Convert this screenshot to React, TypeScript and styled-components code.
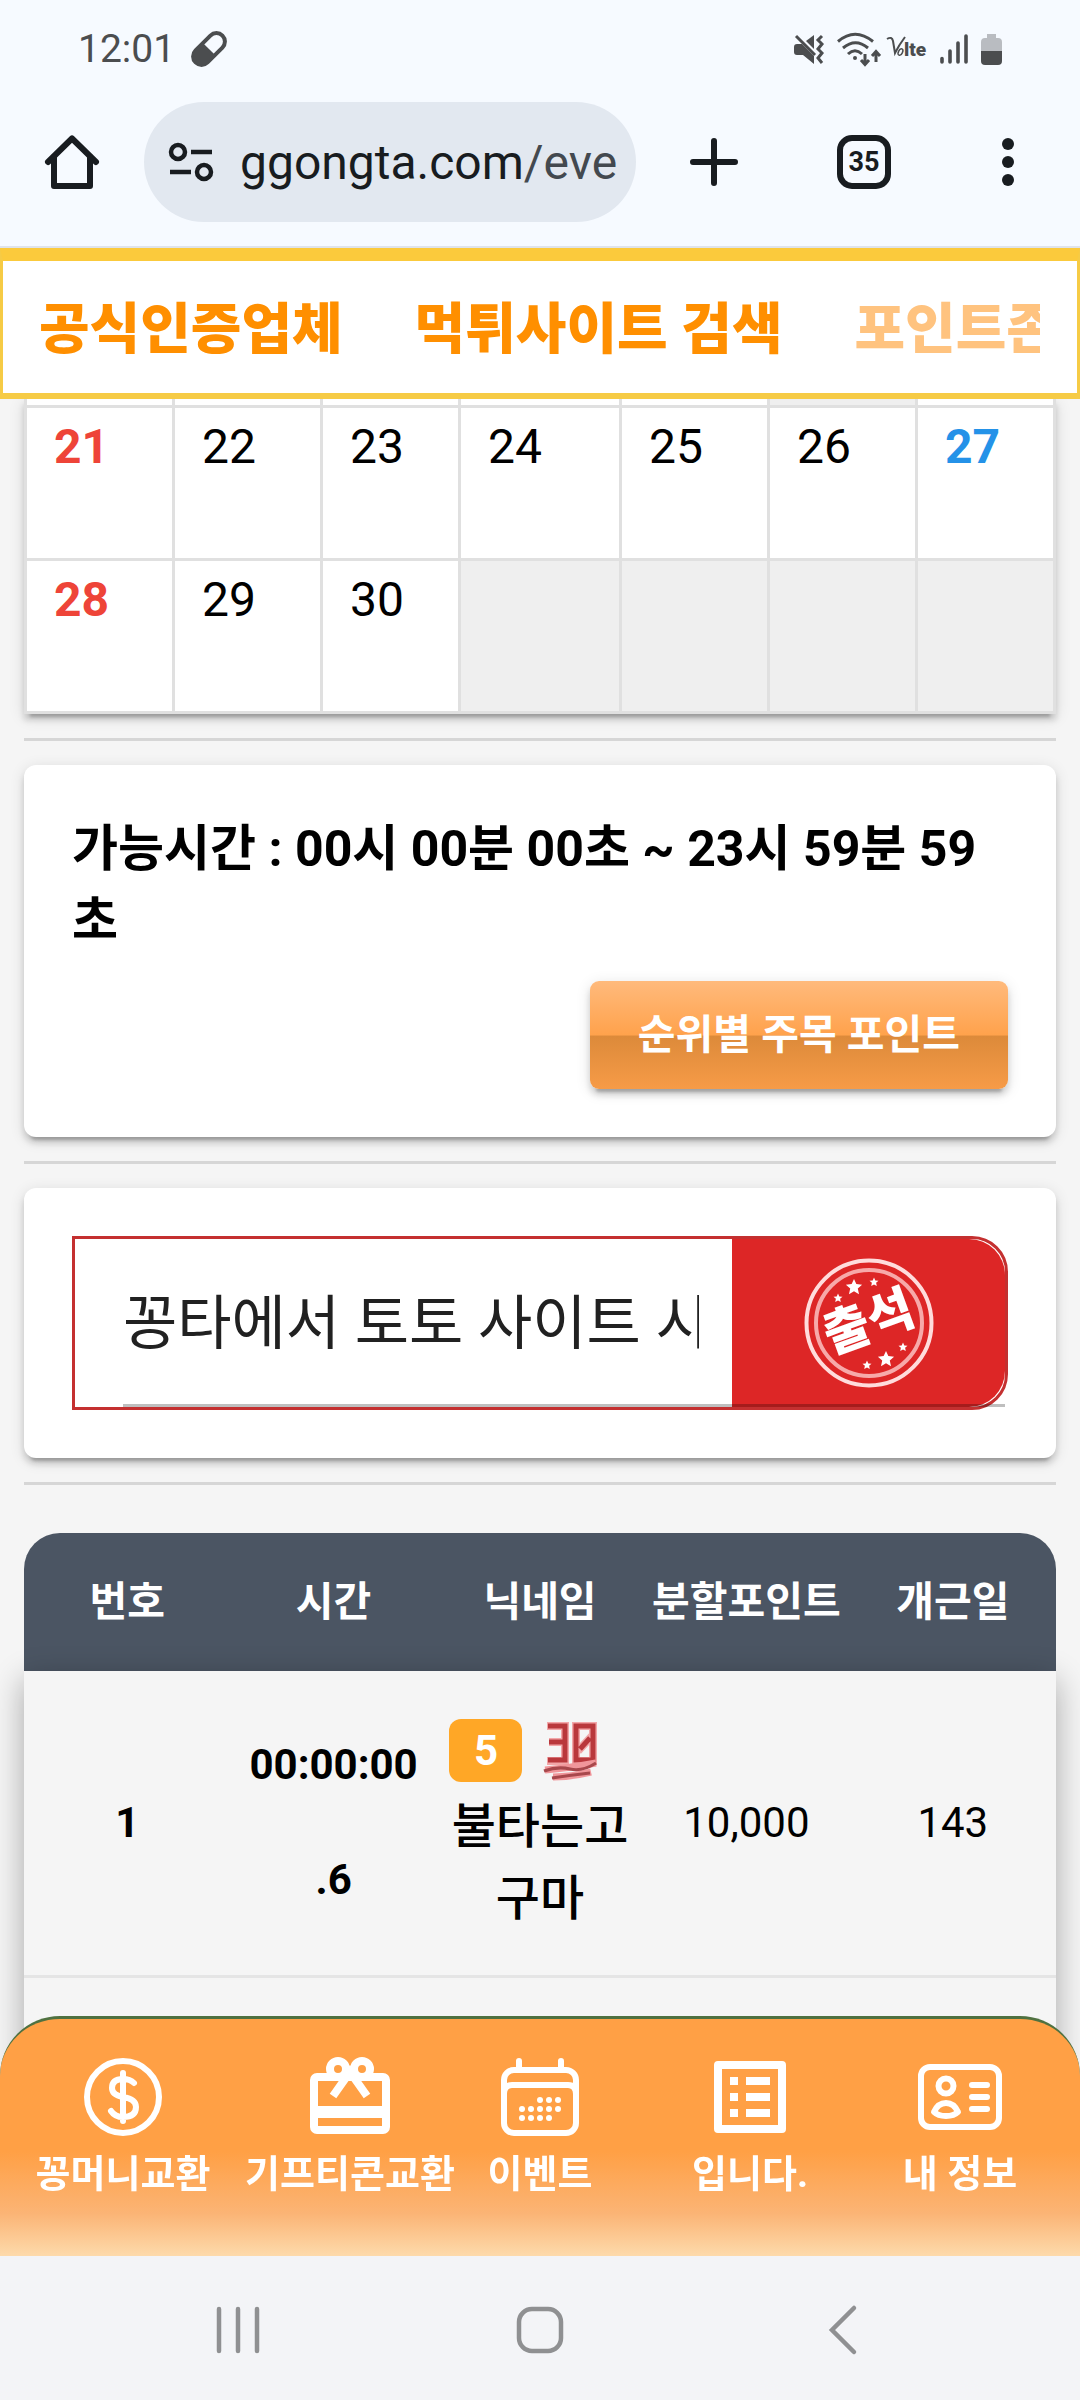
import React from "react";
import styled, { createGlobalStyle } from "styled-components";

const GlobalStyle = createGlobalStyle`
  *, *::before, *::after { box-sizing: border-box; }
  body {
    margin: 0;
    background: #f5f5f5;
    color: #000;
    font-family: Roboto, "Noto Sans CJK KR", sans-serif;
    font-size: 42px;
  }
  button, input { font: inherit; color: inherit; border: 0; background: none; padding: 0; margin: 0; }
  a { color: inherit; text-decoration: none; }
  svg { display: block; flex-shrink: 0; overflow: visible; }
`;

const cardShadow =
  "0 6px 6px rgba(0,0,0,.14), 0 9px 3px -6px rgba(0,0,0,.2), 0 3px 15px rgba(0,0,0,.12)";

const Shell = styled.div`
  min-height: 100vh;
  display: flex;
  flex-direction: column;
  padding-bottom: 144px;
`;

/* ---------- phone status bar ---------- */

const StatusBar = styled.div`
  height: 98px;
  padding: 0 78px;
  display: flex;
  align-items: center;
  justify-content: space-between;
  background: #f6faff;
  color: #4b4d4f;
`;

const StatusGroup = styled.div<{ $gap: number }>`
  display: flex;
  align-items: center;
  gap: ${(p) => p.$gap}px;
`;

const Clock = styled.time`
  font-size: 39px;
  line-height: 48px;
`;

/* ---------- browser toolbar ---------- */

const Toolbar = styled.header`
  height: 150px;
  padding-bottom: 20px;
  display: flex;
  align-items: center;
  background: #f6faff;
  border-bottom: 2px solid #dfe3ea;
  color: #181c20;
`;

const ToolButton = styled.button<{ $wide?: boolean }>`
  width: ${(p) => (p.$wide ? 156 : 144)}px;
  height: 120px;
  display: flex;
  align-items: center;
  justify-content: center;
`;

const AddressBar = styled.button`
  flex: 1;
  min-width: 0;
  height: 120px;
  padding: 0 16px 0 24px;
  border-radius: 60px;
  background: #e2e8f0;
  display: flex;
  align-items: center;
  gap: 26px;
  overflow: hidden;
  white-space: nowrap;
  font-size: 48px;
`;

const UrlPath = styled.span`
  color: #43494f;
`;

const TabCount = styled.span`
  width: 54px;
  height: 54px;
  border: 6px solid #181c20;
  border-radius: 15px;
  display: flex;
  align-items: center;
  justify-content: center;
  font-size: 27px;
  font-weight: 700;
`;

/* ---------- site menu ---------- */

const SiteMenu = styled.nav`
  border: 3px solid #f6cb45;
  border-top: 13px solid #fbca3c;
  border-bottom-width: 6px;
  background: #fff;
  padding: 0 37px 0 36px;
  position: relative;
  z-index: 1;
`;

const MenuTrack = styled.div`
  height: 132px;
  padding-top: 4px;
  display: flex;
  align-items: center;
  gap: 72px;
  overflow: hidden;
  white-space: nowrap;
`;

const MenuLink = styled.a<{ $faded?: boolean }>`
  font-size: 55px;
  line-height: 72px;
  font-weight: 900;
  color: ${(p) => (p.$faded ? "#ffc37f" : "#ff8f00")};
`;

/* ---------- page content ---------- */

const Main = styled.main`
  flex: 1;
  display: flex;
  flex-direction: column;
  padding: 0 24px;
`;

const Calendar = styled.table`
  width: 100%;
  table-layout: fixed;
  border-collapse: collapse;
  background: #fff;
  box-shadow: ${cardShadow};
`;

const DayCell = styled.td<{ $tone?: string; $blank?: boolean; $sliver?: boolean }>`
  height: ${(p) => (p.$sliver ? 7 : 153)}px;
  padding: ${(p) => (p.$sliver ? "0" : "3px 27px")};
  border: 3px solid #e0e0e0;
  border-top-width: ${(p) => (p.$sliver ? 0 : 3)}px;
  vertical-align: top;
  font-size: 48px;
  line-height: 72px;
  font-weight: ${(p) => (p.$tone ? 700 : 400)};
  color: ${(p) => p.$tone || "#000"};
  background: ${(p) => (p.$blank ? "#efefef" : "#fff")};
`;

const Rule = styled.hr`
  width: 100%;
  height: 3px;
  margin: 24px 0;
  border: 0;
  background: #d6d6d6;
`;

const Card = styled.section`
  padding: 48px;
  border-radius: 12px;
  background: #fff;
  box-shadow: ${cardShadow};
`;

const Notice = styled.p`
  margin: 0 0 24px;
  font-size: 50px;
  line-height: 72px;
  font-weight: 700;
  word-break: break-all;
`;

const CardActions = styled.div`
  display: flex;
  justify-content: flex-end;
`;

const GlossButton = styled.button`
  height: 108px;
  padding: 0 48px 8px;
  border-radius: 9px;
  background: linear-gradient(#ffba7c 0%, #ffa24c 50%, #dc8a3a 51%, #f79b47 100%);
  box-shadow: ${cardShadow};
  color: #fff;
  font-size: 41px;
  font-weight: 700;
`;

const CheckInForm = styled.form`
  display: flex;
  height: 174px;
  border: 3px solid #c43030;
  border-radius: 0 36px 36px 0;
  position: relative;
`;

const Underline = styled.span`
  position: absolute;
  left: 48px;
  right: 0;
  bottom: 0;
  height: 3px;
  background: rgba(0, 0, 0, 0.25);
`;

const GreetingField = styled.div`
  flex: 1;
  min-width: 0;
  padding: 0 33px 8px 48px;
`;

const GreetingInput = styled.input`
  width: 100%;
  height: 100%;
  outline: none;
  font-size: 59px;
  color: #212121;
`;

const StampButton = styled.button`
  width: 273px;
  border-radius: 0 36px 36px 0;
  background: #dd2626;
  display: flex;
  align-items: center;
  justify-content: center;
`;

/* ---------- attendance ranking ---------- */

const Ranking = styled.table`
  flex: 1;
  display: flex;
  flex-direction: column;
  margin-top: 24px;
`;

const RankHead = styled.thead`
  display: block;
  background: #4b5563;
  border-radius: 36px 36px 0 0;
  color: #fff;
`;

const RankBody = styled.tbody`
  display: block;
  flex: 1;
  background: #f5f5f5;
  box-shadow: 0 9px 30px rgba(0, 0, 0, 0.32);
`;

const RankRow = styled.tr`
  display: grid;
  grid-template-columns: repeat(5, minmax(0, 1fr));
  align-items: center;
`;

const EntryRow = styled(RankRow)`
  padding: 40px 0;
  border-bottom: 3px solid #e5e5e5;
`;

const HeadCell = styled.th`
  padding: 39px 0;
  font-size: 41px;
  line-height: 60px;
  font-weight: 700;
  white-space: nowrap;
`;

const Cell = styled.td<{ $strong?: boolean }>`
  padding: 0;
  text-align: center;
  font-size: 42px;
  line-height: 60px;
  font-weight: ${(p) => (p.$strong ? 700 : 400)};
`;

const TimeStack = styled.div`
  display: flex;
  flex-direction: column;
  gap: 55px;
`;

const Marks = styled.div`
  display: flex;
  align-items: center;
  justify-content: center;
  gap: 21px;
  height: 80px;
  padding-right: 33px;
`;

const Level = styled.span`
  width: 73px;
  height: 63px;
  border-radius: 12px;
  background: #ffa726;
  color: #fff;
  font-size: 42px;
  line-height: 63px;
  font-weight: 700;
`;

const Nickname = styled.div`
  padding: 0 12px;
  font-size: 48px;
  line-height: 72px;
  font-weight: 500;
  word-break: break-all;
`;

/* ---------- bottom dock ---------- */

const Dock = styled.div`
  position: fixed;
  left: 0;
  right: 0;
  bottom: 0;
`;

const AppNav = styled.nav`
  height: 240px;
  padding: 39px 40px 0 6px;
  display: grid;
  grid-template-columns: 234fr 220fr 160fr 260fr 160fr;
  border-top: 3px solid #4f7140;
  border-radius: 60px 60px 0 0;
  background: linear-gradient(#ffa045 0%, #ffa045 56%, #fbb475 82%, #fddaab 100%);
  color: #fff;
`;

const AppLink = styled.a`
  display: flex;
  flex-direction: column;
  align-items: center;
  gap: 8px;
  font-size: 38px;
  line-height: 60px;
  font-weight: 700;
  white-space: nowrap;
`;

const SystemNav = styled.div`
  height: 144px;
  padding: 4px 87px 0;
  display: grid;
  grid-template-columns: repeat(3, 1fr);
  align-items: center;
  justify-items: center;
  background: #f3f4f7;
  color: #8f9092;
`;

const SystemButton = styled.button`
  padding: 24px;
`;

/* ---------- drawings ---------- */

const PillIcon = () => (
  <svg width="36" height="36" viewBox="0 0 36 36" fill="none">
    <g transform="rotate(45 18 18)">
      <rect x="9.5" y="-1" width="17" height="38" rx="8.5" stroke="currentColor" strokeWidth="4" />
      <path d="M9 18h18v10a9 9 0 0 1-18 0z" fill="currentColor" />
    </g>
  </svg>
);

const MuteIcon = () => (
  <svg width="30" height="32" viewBox="0 0 30 32" fill="none">
    <path d="M3 11h5l12 12v8L9 22H3q-3 0-3-3v-5q0-3 3-3z" fill="currentColor" />
    <path d="M12 8l8-6v14z" fill="currentColor" />
    <path d="M2 3l19 19" stroke="currentColor" strokeWidth="3" />
    <path d="M28 3l-4 4 4 4-4 5 4 4-4 5 4 5" stroke="currentColor" strokeWidth="3" />
  </svg>
);

const WifiIcon = () => (
  <svg width="37" height="34" viewBox="0 0 37 34" fill="none" stroke="currentColor" strokeWidth="3">
    <path d="M1 9.500Q18-5 36 9.500M6 16q12.500-10.500 25 0M11 22q7-6.500 14 0" />
    <circle cx="18" cy="26" r="2" fill="currentColor" stroke="none" />
    <path d="M28 22v10M24 28l4 4.500 4-4.500M39 30V20M35 24l4-4.500 4 4.500" />
  </svg>
);

const VolteIcon = () => (
  <svg width="40" height="26" viewBox="0 0 40 26" fill="none">
    <path d="M0 3q5-3 6 2l2 12Q12 9 18 1" stroke="currentColor" strokeWidth="2" />
    <ellipse cx="13.500" cy="16" rx="2" ry="3.500" transform="rotate(25 13.500 16)" stroke="currentColor" strokeWidth="1.500" />
    <text x="17" y="20" fontSize="19" fontWeight="900" fontFamily="Roboto, sans-serif" fill="currentColor">lte</text>
  </svg>
);

const SignalIcon = () => (
  <svg width="28" height="30" viewBox="0 0 28 30" stroke="currentColor" strokeWidth="3.600" strokeLinecap="round">
    <path d="M2 28v-3.500M10 28V17M18 28V9M26 28V2" />
  </svg>
);

const BatteryIcon = () => (
  <svg width="21" height="32" viewBox="0 0 21 32">
    <path d="M6 1h9v4h2q4 0 4 4v9H0V9q0-4 4-4h2z" fill="#b9bcc1" />
    <path d="M0 18h21v10q0 4-4 4H4q-4 0-4-4z" fill="#4b4d4f" />
  </svg>
);

const HomeIcon = () => (
  <svg width="54" height="54" viewBox="0 0 54 54" fill="none" stroke="currentColor" strokeWidth="6" strokeLinecap="round" strokeLinejoin="round">
    <path d="M3 27L27 3.500 51 27" />
    <path d="M9 22v29h36V22" />
  </svg>
);

const SiteInfoIcon = () => (
  <svg width="46" height="40" viewBox="0 0 46 40" fill="none" stroke="currentColor" strokeWidth="4.500">
    <circle cx="10" cy="10" r="7" />
    <path d="M23 10h21M2 30h21" />
    <circle cx="36" cy="30" r="7" />
  </svg>
);

const PlusIcon = () => (
  <svg width="48" height="48" viewBox="0 0 48 48" stroke="currentColor" strokeWidth="6" strokeLinecap="round">
    <path d="M24 3v42M3 24h42" />
  </svg>
);

const MoreIcon = () => (
  <svg width="12" height="48" viewBox="0 0 12 48" fill="currentColor">
    <circle cx="6" cy="6" r="6" />
    <circle cx="6" cy="24" r="6" />
    <circle cx="6" cy="42" r="6" />
  </svg>
);

const star = "M0-9l2.600 5.800 6.400.6-4.800 4.200 1.400 6.400L0 4.800l-5.600 3.200 1.400-6.400-4.800-4.200 6.400-.6z";

const StampIcon = () => (
  <svg width="130" height="130" viewBox="0 0 130 130" fill="#fff">
    <circle cx="65" cy="65" r="62.500" fill="none" stroke="#ffdcdc" strokeWidth="4" />
    <circle cx="65" cy="65" r="53" fill="none" stroke="#f7a9a9" strokeWidth="4" />
    <path d={star} transform="translate(50 29) scale(.9)" />
    <path d={star} transform="translate(82 101) scale(.9)" />
    <path d={star} transform="translate(34 40) scale(.5)" />
    <path d={star} transform="translate(70 24) scale(.5)" />
    <path d={star} transform="translate(63 107) scale(.5)" />
    <path d={star} transform="translate(99 89) scale(.5)" />
    <text
      x="65"
      y="81"
      textAnchor="middle"
      fontFamily='"Noto Sans CJK KR", sans-serif'
      fontSize="50"
      fontWeight="900"
      transform="rotate(-20 65 65)"
    >
      출석
    </text>
  </svg>
);

const ThirtyIcon = () => (
  <svg width="54" height="60" viewBox="0 0 54 60" fill="none">
    <path d="M4 5h18v35H4M6 21h16M33 5h17v35H33zM35 30L49 15" stroke="#f2a6a8" strokeWidth="8" />
    <path d="M5 5h17v34H5M6 21h16M33 5h17v34H33zM37 28l10-11" stroke="#b9383c" strokeWidth="5" />
    <path d="M2 49q24-2 51-7M10 56q18 0 38-5" stroke="#f0969a" strokeWidth="7" />
    <path d="M1 50q14-5 26-2t26-6M9 57q20-3 38-5" stroke="#a8484c" strokeWidth="3" />
  </svg>
);

const CoinIcon = () => (
  <svg width="78" height="78" viewBox="0 0 78 78" fill="none" stroke="currentColor" strokeWidth="6" strokeLinecap="round">
    <circle cx="39" cy="39" r="36" />
    <path d="M39 15v48M50 25q-4-4-11-4-11 0-11 9 0 7 11 9 13 2 13 10 0 10-13 10-8 0-12-6" />
  </svg>
);

const GiftIcon = () => (
  <svg width="82" height="78" viewBox="0 0 82 78" fill="none" stroke="currentColor" strokeWidth="8">
    <rect x="5" y="19" width="72" height="53" rx="3" />
    <path d="M5 54h72" strokeWidth="12" />
    <circle cx="29" cy="11" r="8" />
    <circle cx="53" cy="11" r="8" />
    <path d="M24 38l17-24 17 24" />
  </svg>
);

const calendarDots = [
  [39, 42], [48, 42], [57, 42],
  [21, 51], [30, 51], [39, 51], [48, 51], [57, 51],
  [21, 60], [30, 60], [39, 60], [48, 60],
];

const EventIcon = () => (
  <svg width="78" height="78" viewBox="0 0 78 78" fill="none" stroke="currentColor" strokeWidth="6" strokeLinecap="round">
    <rect x="3" y="12" width="72" height="63" rx="10" />
    <path d="M3 36q0-9 8-9h56q8 0 8 9M18 3v9M60 3v9" />
    {calendarDots.map(([x, y]) => (
      <circle key={x + "-" + y} cx={x} cy={y} r="3" fill="currentColor" stroke="none" />
    ))}
  </svg>
);

const ListIcon = () => (
  <svg width="72" height="78" viewBox="0 0 72 78" fill="none" stroke="currentColor" strokeWidth="8">
    <rect x="4" y="7" width="64" height="64" strokeLinejoin="round" />
    <path d="M16 23h8M32 23h24M16 39h8M32 39h24M16 55h8M32 55h24" />
  </svg>
);

const ProfileIcon = () => (
  <svg width="84" height="78" viewBox="0 0 84 78" fill="none" stroke="currentColor" strokeWidth="6" strokeLinecap="round">
    <rect x="3" y="9" width="78" height="60" rx="9" />
    <circle cx="28" cy="28" r="7.500" />
    <path d="M16 54q4-9 12-9t12 9q-4 4-12 4t-12-4z" strokeLinejoin="round" />
    <path d="M54 27h15M54 39h15M54 51h15" />
  </svg>
);

const RecentsGlyph = () => (
  <svg width="44" height="48" viewBox="0 0 44 48" stroke="currentColor" strokeWidth="4.500" strokeLinecap="round">
    <path d="M3 3v42M22 3v42M41 3v42" />
  </svg>
);

const HomeGlyph = () => (
  <svg width="48" height="48" viewBox="0 0 48 48" fill="none" stroke="currentColor" strokeWidth="4.500">
    <rect x="3" y="3" width="42" height="42" rx="13" />
  </svg>
);

const BackGlyph = () => (
  <svg width="28" height="50" viewBox="0 0 28 50" fill="none" stroke="currentColor" strokeWidth="4.500" strokeLinecap="round">
    <path d="M26 3L4 25l22 22" />
  </svg>
);

/* ---------- data ---------- */

const SUNDAY = "#ee4438";
const SATURDAY = "#2492e8";
const columnWidths = [148, 148, 138, 161, 148, 148, 138];
const weeks: (number | null)[][] = [
  [21, 22, 23, 24, 25, 26, 27],
  [28, 29, 30, null, null, null, null],
];
const dayTone = (i: number) => (i === 0 ? SUNDAY : i === 6 ? SATURDAY : undefined);

const menu = [
  { label: "공식인증업체" },
  { label: "먹튀사이트 검색" },
  { label: "포인트존", faded: true },
];

const columns = ["번호", "시간", "닉네임", "분할포인트", "개근일"];

const appLinks = [
  { label: "꽁머니교환", Icon: CoinIcon },
  { label: "기프티콘교환", Icon: GiftIcon },
  { label: "이벤트", Icon: EventIcon },
  { label: "입니다.", Icon: ListIcon },
  { label: "내 정보", Icon: ProfileIcon },
];

export default function App() {
  return (
    <Shell>
      <GlobalStyle />
      <StatusBar>
        <StatusGroup $gap={16}>
          <Clock>12:01</Clock>
          <PillIcon />
        </StatusGroup>
        <StatusGroup $gap={13}>
          <MuteIcon />
          <WifiIcon />
          <VolteIcon />
          <SignalIcon />
          <BatteryIcon />
        </StatusGroup>
      </StatusBar>

      <Toolbar>
        <ToolButton aria-label="Home"><HomeIcon /></ToolButton>
        <AddressBar>
          <SiteInfoIcon />
          <span>ggongta.com<UrlPath>/eve</UrlPath></span>
        </AddressBar>
        <ToolButton $wide aria-label="New tab"><PlusIcon /></ToolButton>
        <ToolButton><TabCount>35</TabCount></ToolButton>
        <ToolButton aria-label="More"><MoreIcon /></ToolButton>
      </Toolbar>

      <SiteMenu>
        <MenuTrack>
          {menu.map((m) => (
            <MenuLink key={m.label} href="#" $faded={m.faded}>{m.label}</MenuLink>
          ))}
        </MenuTrack>
      </SiteMenu>

      <Main>
        <Calendar>
          <colgroup>
            {columnWidths.map((w, i) => (
              <col key={i} style={{ width: `${(w / 1029) * 100}%` }} />
            ))}
          </colgroup>
          <tbody>
            <tr>
              {columnWidths.map((_, i) => (
                <DayCell key={i} $sliver $blank={i === 5} />
              ))}
            </tr>
            {weeks.map((week, w) => (
              <tr key={w}>
                {week.map((day, i) => (
                  <DayCell key={i} $blank={day === null} $tone={day === null ? undefined : dayTone(i)}>
                    {day}
                  </DayCell>
                ))}
              </tr>
            ))}
          </tbody>
        </Calendar>

        <Rule />

        <Card>
          <Notice>가능시간 : 00시 00분 00초 ~ 23시 59분 59초</Notice>
          <CardActions>
            <GlossButton>순위별 주목 포인트</GlossButton>
          </CardActions>
        </Card>

        <Rule />

        <Card>
          <CheckInForm onSubmit={(e) => e.preventDefault()}>
            <GreetingField>
              <GreetingInput aria-label="출석 인사말" defaultValue="꽁타에서 토토 사이트 시" />
            </GreetingField>
            <StampButton type="submit"><StampIcon /></StampButton>
            <Underline />
          </CheckInForm>
        </Card>

        <Rule />

        <Ranking>
          <RankHead>
            <RankRow>
              {columns.map((c) => (
                <HeadCell key={c} scope="col">{c}</HeadCell>
              ))}
            </RankRow>
          </RankHead>
          <RankBody>
            <EntryRow>
              <Cell $strong>1</Cell>
              <Cell $strong>
                <TimeStack>
                  <span>00:00:00</span>
                  <span>.6</span>
                </TimeStack>
              </Cell>
              <Cell>
                <Marks>
                  <Level>5</Level>
                  <ThirtyIcon />
                </Marks>
                <Nickname>불타는고구마</Nickname>
              </Cell>
              <Cell>10,000</Cell>
              <Cell>143</Cell>
            </EntryRow>
          </RankBody>
        </Ranking>
      </Main>

      <Dock>
        <AppNav>
          {appLinks.map(({ label, Icon }) => (
            <AppLink key={label} href="#">
              <Icon />
              {label}
            </AppLink>
          ))}
        </AppNav>
        <SystemNav>
          <SystemButton aria-label="Recent apps"><RecentsGlyph /></SystemButton>
          <SystemButton aria-label="Home screen"><HomeGlyph /></SystemButton>
          <SystemButton aria-label="Back"><BackGlyph /></SystemButton>
        </SystemNav>
      </Dock>
    </Shell>
  );
}
